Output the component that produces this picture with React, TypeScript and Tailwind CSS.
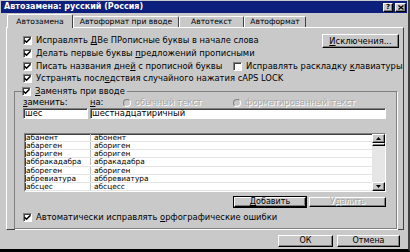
import React from "react";

const raised =
  "border border-t-white border-l-white border-r-black border-b-black shadow-[inset_-1px_-1px_#808080]";
const sunken =
  "border border-t-[#808080] border-l-[#808080] border-r-white border-b-white shadow-[inset_1px_1px_#404040]";

function CheckBox({ checked = true }: { checked?: boolean }) {
  return (
    <span className={`flex h-[9px] w-[9px] flex-shrink-0 items-center justify-center bg-white ${sunken}`}>
      {checked && (
        <svg width="7" height="7" viewBox="0 0 7 7" aria-hidden="true">
          <path d="M0.5 3.2L2.5 5.2L6.5 1.2" stroke="black" strokeWidth="1.6" fill="none" />
        </svg>
      )}
    </span>
  );
}

function CheckRow({ label, checked = true }: { label: React.ReactNode; checked?: boolean }) {
  return (
    <div className="flex h-[13px] items-center gap-[4px] whitespace-nowrap">
      <CheckBox checked={checked} />
      <span>{label}</span>
    </div>
  );
}

function Radio({ label }: { label: string }) {
  return (
    <div className="flex items-center gap-[4px] whitespace-nowrap">
      <span className="h-[8px] w-[8px] rounded-full border border-[#808080] border-b-white border-r-white bg-[#c9c9c9]" />
      <span className="text-[#a8a8a8] [text-shadow:1px_1px_0_#fff]">{label}</span>
    </div>
  );
}

function Btn({
  children,
  className = "",
  disabled,
  primary,
}: {
  children: React.ReactNode;
  className?: string;
  disabled?: boolean;
  primary?: boolean;
}) {
  return (
    <div
      className={`flex items-center justify-center whitespace-nowrap ${raised} ${primary ? "outline outline-1 outline-black" : ""} ${
        disabled ? "text-[#a8a8a8] [text-shadow:1px_1px_0_#fff]" : ""
      } ${className}`}
    >
      {children}
    </div>
  );
}

const rows: [string, string][] = [
  ["абанент", "абонент"],
  ["абареген", "абориген"],
  ["абариген", "абориген"],
  ["аббракадабра", "абракадабра"],
  ["абореген", "абориген"],
  ["абревиатура", "аббревиатура"],
  ["абсцес", "абсцесс"],
];

function Tab({ label, active, w }: { label: string; active?: boolean; w: string }) {
  return (
    <div
      className={`flex items-center justify-center whitespace-nowrap rounded-t-[2px] border-l border-r border-t border-l-white border-r-[#404040] border-t-white text-[7.6px] ${w} ${
        active ? "relative z-10 -mb-px h-[14px] bg-[#c9c9c9]" : "mt-[2px] h-[11px]"
      }`}
    >
      {label}
    </div>
  );
}

export default function App() {
  return (
    <div className="flex h-[252px] w-[410px] flex-col overflow-hidden border-b-[3px] border-r-2 border-b-black border-r-[#404040] bg-[#c9c9c9] font-['DejaVu_Sans',Verdana,sans-serif] text-[8.4px] leading-none text-black">
      <div className="mx-[1px] mt-[1px] flex h-[12px] items-center justify-between bg-[#0c1f7c] pl-[3px] pr-[1px]">
        <span className="text-[8px] font-bold text-white">Автозамена: русский (Россия)</span>
        <div className="flex gap-[2px]">
          <span className={`flex h-[9px] w-[10px] items-center justify-center bg-[#c9c9c9] text-[7px] font-bold ${raised}`}>?</span>
          <span className={`flex h-[9px] w-[11px] items-center justify-center bg-[#c9c9c9] ${raised}`}>
            <svg width="6" height="5" viewBox="0 0 6 5" aria-hidden="true">
              <path d="M0.5 0.5L5.5 4.5M5.5 0.5L0.5 4.5" stroke="black" strokeWidth="1.3" />
            </svg>
          </span>
        </div>
      </div>

      <div className="mt-[1px] flex h-[13px] items-end pl-[7px]">
        <Tab label="Автозамена" active w="w-[66px]" />
        <Tab label="Автоформат при вводе" w="w-[106px]" />
        <Tab label="Автотекст" w="w-[65px]" />
        <Tab label="Автоформат" w="w-[62px]" />
      </div>

      <div className="ml-[6px] mr-[4px] flex h-[203px] flex-col border border-b-[#404040] border-l-white border-r-[#404040] border-t-white pl-[16px] pt-[6px]">
        <div className="flex">
          <div className="flex min-w-0 flex-1 flex-col">
            <CheckRow label={<>Исправлять <u>Д</u>Ве ПРописные буквы в начале слова</>} />
            <CheckRow label={<>Делать первые буквы <u>п</u>редложений прописными</>} />
          </div>
          <Btn className="mr-[4px] h-[14px] w-[77px]">
            <span><u>И</u>сключения...</span>
          </Btn>
        </div>
        <div className="flex">
          <div className="w-[210px]">
            <CheckRow label={<>Писать названия дне<u>й</u> с прописной буквы</>} />
          </div>
          <CheckRow checked={false} label={<>Исправлять раскладку <u>к</u>лавиатуры</>} />
        </div>
        <CheckRow label={<>Устранять посл<u>е</u>дствия случайного нажатия cAPS LOCK</>} />

        <fieldset className="-ml-[9px] mr-[6px] mt-[1px] border border-[#808080] px-[8px] pb-[4px] shadow-[1px_1px_0_#fff]">
          <legend className="-ml-[1px] pr-[2px]">
            <CheckRow label={<><u>З</u>аменять при вводе</>} />
          </legend>
          <div className="flex h-[9px] items-center">
            <span className="w-[67px]"><u>з</u>аменить:</span>
            <span className="w-[33px]"><u>н</u>а:</span>
            <div className="w-[110px]">
              <Radio label="обычный текст" />
            </div>
            <Radio label="форматированный текст" />
          </div>
          <div className="mt-[1px] flex h-[11px] gap-[2px] pr-[2px]">
            <div className={`w-[65px] bg-white pl-[1px] leading-[9px] ${sunken}`}>шес</div>
            <div className={`flex-1 bg-white pl-[1px] leading-[9px] ${sunken}`}>шестнадцатиричный</div>
          </div>

          <div className={`ml-[1px] mr-[2px] mt-[14px] flex h-[59px] bg-white text-[7.4px] ${sunken}`}>
            <div className="flex flex-1 flex-col">
              {rows.map(([a, b]) => (
                <div key={a} className="flex h-[8.3px] items-center border-b border-[#e4e4e4] leading-[7px]">
                  <span className="w-[66px] border-r border-[#c0c0c0] pl-[1px]">{a}</span>
                  <span className="pl-[3px]">{b}</span>
                </div>
              ))}
            </div>
            <div className="flex w-[13px] flex-col bg-[#e6e6e6]">
              <div className={`flex h-[9px] items-center justify-center bg-[#c9c9c9] ${raised}`}>
                <svg width="5" height="3" viewBox="0 0 5 3" aria-hidden="true"><path d="M2.5 0L5 3H0Z" fill="black" /></svg>
              </div>
              <div className={`h-[3px] bg-[#c9c9c9] ${raised}`} />
              <div className="flex-1" />
              <div className={`flex h-[9px] items-center justify-center bg-[#c9c9c9] ${raised}`}>
                <svg width="5" height="3" viewBox="0 0 5 3" aria-hidden="true"><path d="M0 0H5L2.5 3Z" fill="black" /></svg>
              </div>
            </div>
          </div>

          <div className="mt-[5px] flex justify-end gap-[3px] pr-[2px] text-[8px]">
            <Btn primary className="h-[10px] w-[72px]"><span><u>Д</u>обавить</span></Btn>
            <Btn disabled className="h-[10px] w-[77px]">Удалить</Btn>
          </div>

          <div className="mt-[4px]">
            <CheckRow label={<>Автоматически исправлять <u>о</u>рфографические ошибки</>} />
          </div>
        </fieldset>
      </div>

      <div className="mt-[5px] flex justify-end gap-[4px] pr-[8px] text-[8px]">
        <Btn className="h-[12px] w-[55px]">ОК</Btn>
        <Btn className="h-[12px] w-[63px]">Отмена</Btn>
      </div>
    </div>
  );
}
